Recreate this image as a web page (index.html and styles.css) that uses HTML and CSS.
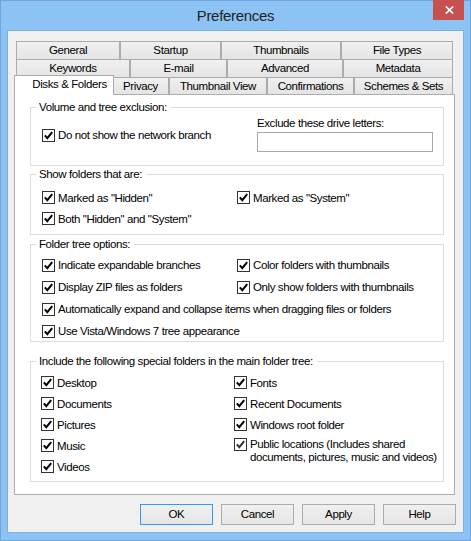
FILE: index.html
```html
<!DOCTYPE html>
<html>
<head>
<meta charset="utf-8">
<title>Preferences</title>
<link rel="stylesheet" href="styles.css">
</head>
<body>
<div class="window">
  <div class="titlebar">
    <span></span>
    <span class="title">Preferences</span>
    <button class="close" aria-label="Close"><svg width="9" height="8" viewBox="0 0 9 8"><path d="M0.8 0.5 L8.2 7.5 M8.2 0.5 L0.8 7.5" stroke="#fff" stroke-width="1.7" fill="none"/></svg></button>
  </div>
  <div class="client">
    <div class="tabs">
      <div class="tabrow r1">
        <div class="tab">General</div>
        <div class="tab">Startup</div>
        <div class="tab">Thumbnails</div>
        <div class="tab">File Types</div>
      </div>
      <div class="tabrow r2">
        <div class="tab">Keywords</div>
        <div class="tab">E-mail</div>
        <div class="tab">Advanced</div>
        <div class="tab">Metadata</div>
      </div>
      <div class="tabrow r3">
        <div class="tab sel">Disks &amp; Folders</div>
        <div class="tab">Privacy</div>
        <div class="tab">Thumbnail View</div>
        <div class="tab">Confirmations</div>
        <div class="tab">Schemes &amp; Sets</div>
      </div>
    </div>
    <div class="panel">
      <fieldset class="grp g1">
        <legend>Volume and tree exclusion:</legend>
        <div class="g1body">
          <div class="g1left">
            <label class="cb"><span class="box"><svg width="11" height="11" viewBox="0 0 11 11"><path d="M1.8 5.4 L4.3 8.2 L9.2 2.2" stroke="#000" stroke-width="2" fill="none"/></svg></span><span class="txt">Do not show the network branch</span></label>
          </div>
          <div class="g1right">
            <div class="lbl">Exclude these drive letters:</div>
            <div class="input"></div>
          </div>
        </div>
      </fieldset>
      <fieldset class="grp g2">
        <legend>Show folders that are:</legend>
        <div class="grid c2">
          <label class="cb"><span class="box"><svg width="11" height="11" viewBox="0 0 11 11"><path d="M1.8 5.4 L4.3 8.2 L9.2 2.2" stroke="#000" stroke-width="2" fill="none"/></svg></span><span class="txt">Marked as "Hidden"</span></label>
          <label class="cb"><span class="box"><svg width="11" height="11" viewBox="0 0 11 11"><path d="M1.8 5.4 L4.3 8.2 L9.2 2.2" stroke="#000" stroke-width="2" fill="none"/></svg></span><span class="txt">Marked as "System"</span></label>
          <label class="cb"><span class="box"><svg width="11" height="11" viewBox="0 0 11 11"><path d="M1.8 5.4 L4.3 8.2 L9.2 2.2" stroke="#000" stroke-width="2" fill="none"/></svg></span><span class="txt">Both "Hidden" and "System"</span></label>
        </div>
      </fieldset>
      <fieldset class="grp g3">
        <legend>Folder tree options:</legend>
        <div class="grid c3">
          <label class="cb"><span class="box"><svg width="11" height="11" viewBox="0 0 11 11"><path d="M1.8 5.4 L4.3 8.2 L9.2 2.2" stroke="#000" stroke-width="2" fill="none"/></svg></span><span class="txt">Indicate expandable branches</span></label>
          <label class="cb"><span class="box"><svg width="11" height="11" viewBox="0 0 11 11"><path d="M1.8 5.4 L4.3 8.2 L9.2 2.2" stroke="#000" stroke-width="2" fill="none"/></svg></span><span class="txt">Color folders with thumbnails</span></label>
          <label class="cb"><span class="box"><svg width="11" height="11" viewBox="0 0 11 11"><path d="M1.8 5.4 L4.3 8.2 L9.2 2.2" stroke="#000" stroke-width="2" fill="none"/></svg></span><span class="txt">Display ZIP files as folders</span></label>
          <label class="cb"><span class="box"><svg width="11" height="11" viewBox="0 0 11 11"><path d="M1.8 5.4 L4.3 8.2 L9.2 2.2" stroke="#000" stroke-width="2" fill="none"/></svg></span><span class="txt">Only show folders with thumbnails</span></label>
          <label class="cb span"><span class="box"><svg width="11" height="11" viewBox="0 0 11 11"><path d="M1.8 5.4 L4.3 8.2 L9.2 2.2" stroke="#000" stroke-width="2" fill="none"/></svg></span><span class="txt">Automatically expand and collapse items when dragging files or folders</span></label>
          <label class="cb span"><span class="box"><svg width="11" height="11" viewBox="0 0 11 11"><path d="M1.8 5.4 L4.3 8.2 L9.2 2.2" stroke="#000" stroke-width="2" fill="none"/></svg></span><span class="txt">Use Vista/Windows 7 tree appearance</span></label>
        </div>
      </fieldset>
      <fieldset class="grp g4">
        <legend>Include the following special folders in the main folder tree:</legend>
        <div class="grid c4">
          <label class="cb"><span class="box"><svg width="11" height="11" viewBox="0 0 11 11"><path d="M1.8 5.4 L4.3 8.2 L9.2 2.2" stroke="#000" stroke-width="2" fill="none"/></svg></span><span class="txt">Desktop</span></label>
          <label class="cb"><span class="box"><svg width="11" height="11" viewBox="0 0 11 11"><path d="M1.8 5.4 L4.3 8.2 L9.2 2.2" stroke="#000" stroke-width="2" fill="none"/></svg></span><span class="txt">Fonts</span></label>
          <label class="cb"><span class="box"><svg width="11" height="11" viewBox="0 0 11 11"><path d="M1.8 5.4 L4.3 8.2 L9.2 2.2" stroke="#000" stroke-width="2" fill="none"/></svg></span><span class="txt">Documents</span></label>
          <label class="cb"><span class="box"><svg width="11" height="11" viewBox="0 0 11 11"><path d="M1.8 5.4 L4.3 8.2 L9.2 2.2" stroke="#000" stroke-width="2" fill="none"/></svg></span><span class="txt">Recent Documents</span></label>
          <label class="cb"><span class="box"><svg width="11" height="11" viewBox="0 0 11 11"><path d="M1.8 5.4 L4.3 8.2 L9.2 2.2" stroke="#000" stroke-width="2" fill="none"/></svg></span><span class="txt">Pictures</span></label>
          <label class="cb"><span class="box"><svg width="11" height="11" viewBox="0 0 11 11"><path d="M1.8 5.4 L4.3 8.2 L9.2 2.2" stroke="#000" stroke-width="2" fill="none"/></svg></span><span class="txt">Windows root folder</span></label>
          <label class="cb"><span class="box"><svg width="11" height="11" viewBox="0 0 11 11"><path d="M1.8 5.4 L4.3 8.2 L9.2 2.2" stroke="#000" stroke-width="2" fill="none"/></svg></span><span class="txt">Music</span></label>
          <label class="cb top"><span class="box"><svg width="11" height="11" viewBox="0 0 11 11"><path d="M1.8 5.4 L4.3 8.2 L9.2 2.2" stroke="#333" stroke-width="2" fill="none"/></svg></span><span class="txt two">Public locations (Includes shared<br>documents, pictures, music and videos)</span></label>
          <label class="cb"><span class="box"><svg width="11" height="11" viewBox="0 0 11 11"><path d="M1.8 5.4 L4.3 8.2 L9.2 2.2" stroke="#000" stroke-width="2" fill="none"/></svg></span><span class="txt">Videos</span></label>
        </div>
      </fieldset>
    </div>
    <div class="buttons">
      <button class="btn def">OK</button>
      <button class="btn">Cancel</button>
      <button class="btn">Apply</button>
      <button class="btn">Help</button>
    </div>
  </div>
</div>
</body>
</html>
```

FILE: styles.css
```css
html, body {
  margin: 0;
  padding: 0;
}
body {
  font-family: "Liberation Sans", Arial, sans-serif;
  font-size: 11.5px;
  letter-spacing: -0.4px;
  color: #000;
  background: #8cc3f4;
}
.window {
  width: 471px;
  height: 541px;
  box-sizing: border-box;
  border: 1px solid #6ea6dc;
  background: #8cc3f4;
  display: flex;
  flex-direction: column;
}
.titlebar {
  margin: -1px 6px 0;
  height: 30px;
  display: grid;
  grid-template-columns: 1fr auto 1fr;
}
.title {
  align-self: center;
  font-size: 15px;
  letter-spacing: -0.3px;
  color: #222;
  padding-top: 1px;
}
.close {
  justify-self: end;
  align-self: start;
  width: 31px;
  height: 20px;
  margin: 0;
  padding: 0 0 1px 1px;
  border: 0;
  background: #c75050;
  display: flex;
  align-items: center;
  justify-content: center;
}
.client {
  flex: 1;
  margin: 0 6px 7px;
  border: 1px solid #7db1e2;
  background: #f0f0f0;
  padding-top: 10px;
}
.tabs {
  margin-left: 8px;
  width: 437px;
}
.tabrow {
  display: flex;
  align-items: flex-start;
  height: 18px;
}
.tabrow.r3 {
  height: 17px;
}
.tab {
  box-sizing: border-box;
  height: 18px;
  border: 1px solid #acacac;
  border-bottom: 0;
  background: linear-gradient(#f0f0f0, #e4e4e4);
  display: flex;
  align-items: center;
  justify-content: center;
  white-space: nowrap;
  padding-bottom: 1px;
}
.r3 .tab {
  height: 17px;
}
.r1 .tab:nth-child(1) { width: 104px; }
.r1 .tab:nth-child(2) { width: 101px; }
.r1 .tab:nth-child(3) { width: 120px; }
.r1 .tab:nth-child(4) { flex: 1; }
.r2 .tab:nth-child(1) { width: 114px; }
.r2 .tab:nth-child(2) { width: 97px; }
.r2 .tab:nth-child(3) { width: 116px; }
.r2 .tab:nth-child(4) { flex: 1; }
.r3 .tab:nth-child(2) { width: 57px; }
.r3 .tab:nth-child(3) { width: 98px; }
.r3 .tab:nth-child(4) { width: 87px; }
.r3 .tab:nth-child(5) { flex: 1; }
.r3 .tab.sel {
  position: relative;
  z-index: 1;
  width: 100px;
  height: 20px;
  margin: -2px -2px -1px -2px;
  background: #fff;
  padding: 0 0 3px 11px;
}
.panel {
  margin-left: 6px;
  width: 441px;
  box-sizing: border-box;
  border: 1px solid #adadad;
  background: #fff;
  padding-bottom: 12px;
}
.grp {
  margin: 0 10px 0 15px;
  padding: 0;
  border: 1px solid #dcdcdc;
  min-width: 0;
}
.grp legend {
  margin-left: 5px;
  padding: 0 4px 0 3px;
  line-height: 14px;
}
.g1 { margin-top: 5px; }
.g2 { margin-top: 1px; }
.g3 { margin-top: 2px; }
.g4 { margin-top: 12px; }
.g1body {
  display: flex;
  height: 51px;
}
.g1left {
  width: 226px;
  box-sizing: border-box;
  padding: 13px 0 0 11px;
}
.g1left .cb {
  height: 16px;
}
.g1right {
  display: flex;
  flex-direction: column;
}
.lbl {
  margin-top: 2px;
  line-height: 15px;
}
.input {
  margin-top: 1px;
  width: 176px;
  height: 20px;
  box-sizing: border-box;
  border: 1px solid #a8a8a8;
  background: #fff;
}
.grid {
  display: grid;
}
.c2 {
  grid-template-columns: 195px 1fr;
  grid-auto-rows: 21px;
  padding: 6px 0 5px 11px;
}
.c3 {
  grid-template-columns: 195px 1fr;
  grid-auto-rows: 20px;
  row-gap: 2px;
  padding: 4px 0 0 11px;
}
.c4 {
  grid-template-columns: 193px 1fr;
  grid-auto-rows: 21px;
  padding: 4px 0 4px 10px;
}
.span {
  grid-column: 1 / -1;
}
.cb {
  display: flex;
  align-items: center;
  gap: 3px;
  white-space: nowrap;
}
.cb.top {
  align-items: flex-start;
  padding-top: 3px;
}
.box {
  flex: none;
  width: 13px;
  height: 13px;
  box-sizing: border-box;
  border: 1px solid #333;
  background: #fff;
  display: flex;
}
.txt.two {
  line-height: 13px;
  margin-top: 0;
}
.buttons {
  display: flex;
  justify-content: flex-end;
  gap: 8px;
  margin-top: 9px;
  padding-right: 7px;
}
.btn {
  width: 73px;
  height: 21px;
  margin: 0;
  padding: 0 0 1px;
  box-sizing: border-box;
  border: 1px solid #acacac;
  background: linear-gradient(#f0f0f0, #e5e5e5);
  font-family: "Liberation Sans", Arial, sans-serif;
  font-size: 11.5px;
  letter-spacing: -0.4px;
  color: #000;
}
.btn.def {
  border-color: #3399ff;
}
```
